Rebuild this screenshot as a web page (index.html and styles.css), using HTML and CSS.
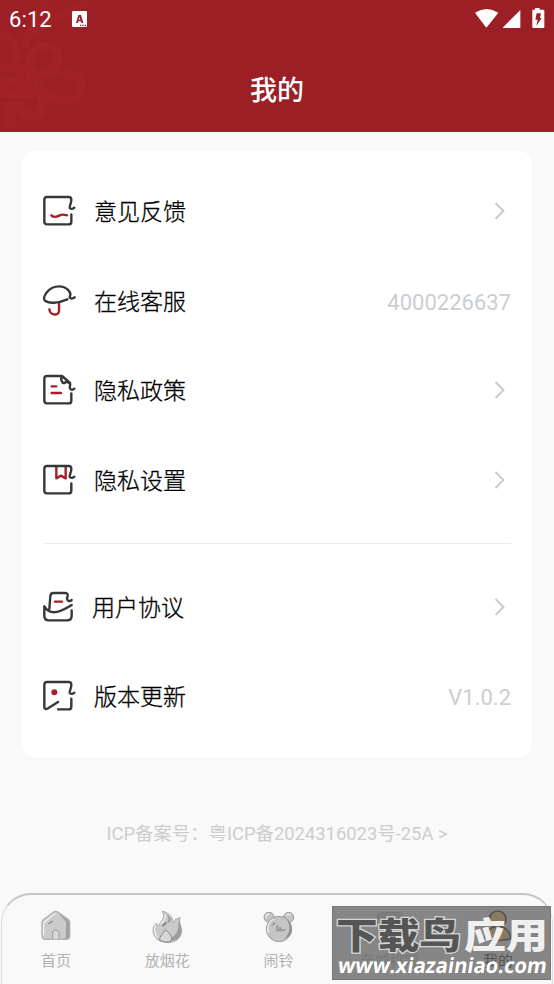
FILE: index.html
```html
<!DOCTYPE html>
<html lang="zh-CN">
<head>
<meta charset="utf-8">
<title>我的</title>
<link rel="stylesheet" href="styles.css">
</head>
<body>
<div class="screen">
  <header class="header">
    <svg class="knot" width="94" height="132" viewBox="0 0 94 132">
      <g class="cord">
        <path d="M31 64C28 52 38 46 47 46S61 56 57 63S44 72 33 74M33 80C45 70 62 71 73 75S84 89 80 95S62 103 52 98S40 88 33 86M18 100C20 111 24 118 33 117S45 105 42 98S36 92 31 90M17 62C20 50 14 36-3 35M25 47C29 30 38 22 47 0M34 35C42 22 63 18 88 0"/>
        <path d="M0 68H32M20 66V98M31 66V98M0 82H30M0 94H30M10 100V130"/>
      </g>
      <g class="cord-fine">
        <path d="M31 67C24 50 40 42 49 43S65 57 60 65S45 74 34 76M36 84C46 75 63 75 72 79S80 88 76 92S62 98 54 94S42 86 36 84M22 101C24 111 32 115 37 109S41 98 34 94M16 64V99M27 64V99M35 68V98M5 103V130M15 103V130M0 64H14M0 88H14"/>
      </g>
    </svg>
    <div class="status">
      <span class="time">6:12</span>
      <svg class="badge" width="15" height="16" viewBox="0 0 45 48"><rect width="45" height="48" rx="4" fill="#fff"/><path fill="#9d1f26" fill-rule="evenodd" d="M12 36L19 12H27L34 36H28L26.500 31H19L17.500 36ZM20.500 26H25L22.800 18ZM24 41h4v4h-4zM31 41h4v4h-4zM38 41h4v4h-4z"/></svg>
      <svg class="signals" width="70" height="21" viewBox="0 0 210 63" fill="#fff"><path d="M0 14Q35-8 70 14L36 57Q34 59 32 57ZM83 59L136 6V60H84ZM172 5H180V0H194V5H205Q208 5 208 8V57Q208 60 205 60H175Q172 60 172 57Z"/><path fill="#9d1f26" d="M185 16h13l-3 14h5l-16 24 4-19h-7z"/></svg>
    </div>
    <h1 class="title">我的</h1>
  </header>

  <main class="main">
    <section class="card">
      <div class="row">
        <svg class="icon" viewBox="0 0 102 96"><path d="M88 58V80Q88 88 80 88H15Q7 88 7 80V14Q7 6 15 6H80Q88 6 88 14C88 26 80 37 84 40Q90 44 97 38"/><path class="accent" d="M28 61C37 70 46 65 53 61S66 59 75 61"/></svg>
        <span class="label">意见反馈</span>
        <svg class="chevron" viewBox="0 0 11 18"><path d="M1.500 1L9.500 9L1.500 17"/></svg>
      </div>
      <div class="row">
        <svg class="icon" viewBox="0 0 102 96"><path class="accent" d="M51 57V77C51 94 25 92 22 73"/><path d="M76 43C48 55 20 57 9 47C-1 37 20 4 51 4C74 4 89 22 84 33C80 40 91 43 98 37"/></svg>
        <span class="label">在线客服</span>
        <span class="value">4000226637</span>
      </div>
      <div class="row">
        <svg class="icon" viewBox="0 0 102 96"><path d="M88 58V80Q88 88 80 88H15Q7 88 7 80V14Q7 6 15 6H60L84 27C86 34 81 41 85 45Q90 50 97 44M60 6C54 16 61 29 67 27Q75 20 84 29"/><path class="accent" d="M29 37H43M29 57H57"/></svg>
        <span class="label">隐私政策</span>
        <svg class="chevron" viewBox="0 0 11 18"><path d="M1.500 1L9.500 9L1.500 17"/></svg>
      </div>
      <div class="row">
        <svg class="icon" viewBox="0 0 102 96"><path class="accent" d="M43 8V43L57 35L71 43V8"/><path d="M88 58V80Q88 88 80 88H15Q7 88 7 80V14Q7 6 15 6H80Q88 6 88 14C88 26 80 37 84 40Q90 44 97 38"/></svg>
        <span class="label">隐私设置</span>
        <svg class="chevron" viewBox="0 0 11 18"><path d="M1.500 1L9.500 9L1.500 17"/></svg>
      </div>
      <div class="divider"></div>
      <div class="row">
        <svg class="icon" viewBox="0 0 102 96"><path d="M22 54L25 15Q26 6 34 6H68Q79 6 77 15C73 23 76 30 81 30Q86 31 89 27M7 46V74Q7 88 21 88H75Q89 88 89 74V58M7 46C23 72 48 68 89 42"/><path class="accent" d="M39 32H60"/></svg>
        <span class="label label-tight">用户协议</span>
        <svg class="chevron" viewBox="0 0 11 18"><path d="M1.500 1L9.500 9L1.500 17"/></svg>
      </div>
      <div class="row">
        <svg class="icon" viewBox="0 0 102 96"><path d="M48 66L16 86Q7 90 7 80V14Q7 6 15 6H80Q88 6 88 14C88 26 80 37 84 40Q90 44 97 38M88 56V80Q88 88 80 88H48"/><circle cx="37" cy="37" r="9" fill="#a81f29" stroke="none"/></svg>
        <span class="label">版本更新</span>
        <span class="value">V1.0.2</span>
      </div>
    </section>
    <p class="icp">ICP备案号：粤ICP备2024316023号-25A &gt;</p>
  </main>

  <nav class="tabs">
    <div class="tab">
      <svg class="tab-icon" viewBox="0 0 96 102"><path d="M6 37Q6 32 10 29L41 6Q47 2 53 6L84 28Q89 32 89 37V77Q89 88 78 88H17Q6 88 6 77Z" fill="#cbcbcb" stroke="#b0b0b0" stroke-width="4"/><path d="M54 8L84 30Q88 34 88 40V75Q88 87 78 87H72Q78 85 78 77V35Z" fill="#a1a1a1"/><path d="M11 76V38L46 10" fill="none" stroke="#efefef" stroke-width="4"/><path d="M38 88V70Q38 60 47 60T57 70V88" fill="#d8d8d8" stroke="#999" stroke-width="3"/><path d="M25 42L38 33" stroke="#888" stroke-width="4"/></svg>
      <span>首页</span>
    </div>
    <div class="tab">
      <svg class="tab-icon" viewBox="0 0 96 102"><path d="M34 3C58 11 66 24 66 37Q71 37 73 28L88 23C80 37 95 50 91 70C86 91 67 99 46 97C23 96 6 82 6 61Q5 49 15 40L21 48C31 33 44 25 34 3Z" fill="#cacaca" stroke="#aaa" stroke-width="3"/><path d="M87 25C77 39 87 48 78 66C68 82 61 80 59 93Q85 92 90 70C95 51 80 39 87 25ZM43 9Q58 22 49 39Q64 34 58 23Z" fill="#9c9c9c"/><path d="M13 44Q5 70 20 83M43 12Q45 26 29 43" fill="none" stroke="#eee" stroke-width="4"/><path d="M26 90C25 77 38 71 43 59C56 69 64 79 61 92Q45 101 26 90Z" fill="#d7d7d7" stroke="#888" stroke-width="3"/><path d="M32 46L46 34V42L36 50Z" fill="#888"/></svg>
      <span>放烟花</span>
    </div>
    <div class="tab">
      <svg class="tab-icon" viewBox="0 0 96 102"><g fill="#c5c5c5" stroke="#999" stroke-width="3"><circle cx="18" cy="22" r="15"/><circle cx="77" cy="22" r="15"/><circle cx="48" cy="57" r="38"/></g><path d="M71 28Q91 59 63 88Q89 78 86 54Q84 36 71 28Z" fill="#929292"/><path d="M9 24Q8 12 19 12M69 16Q75 10 82 14M16 69Q8 40 31 27" fill="none" stroke="#efefef" stroke-width="4"/><path d="M24 48L34 36L38 41Z" fill="#888"/><path d="M43 45V61H67M52 51V62" fill="none" stroke="#999" stroke-width="6"/></svg>
      <span>闹铃</span>
    </div>
    <div class="tab">
      <svg class="tab-icon" viewBox="0 0 96 102"><rect x="10" y="8" width="76" height="60" rx="14" fill="#ccc" stroke="#aaa" stroke-width="4"/></svg>
      <span>亲戚称呼</span>
    </div>
    <div class="tab tab-active">
      <svg class="tab-icon" viewBox="0 0 96 102"><g fill="#ffc050" stroke="#000" stroke-width="5"><path d="M9 86C9 64 25 50 47 50S86 64 86 86Q47 97 9 86Z"/><circle cx="47" cy="28" r="25"/></g></svg>
      <span>我的</span>
    </div>
  </nav>
  <div class="watermark">
    <svg width="219" height="74" viewBox="0 0 219 74">
      <g class="wm-name">
        <text class="wm-dark" x="4" y="43" textLength="125" lengthAdjust="spacingAndGlyphs">下载鸟</text>
        <text class="wm-light" x="132" y="43" textLength="84" lengthAdjust="spacingAndGlyphs">应用</text>
      </g>
      <text class="wm-url" transform="translate(5 67) skewX(-9)" textLength="209" lengthAdjust="spacingAndGlyphs">www.xiazainiao.com</text>
    </svg>
  </div>
</div>
</body>
</html>
```
FILE: styles.css
```css
* { box-sizing: border-box; }

body {
  margin: 0;
  background: #f9f9f9;
  font-family: Roboto, "Noto Sans CJK SC", sans-serif;
}

.screen {
  position: relative;
  display: flex;
  flex-direction: column;
  width: 554px;
  height: 984px;
  overflow: hidden;
}

.header {
  position: relative;
  height: 132px;
  flex: none;
  background: #9d1f26;
  color: #fff;
}

.knot { position: absolute; left: 0; top: 0; }
.cord { fill: none; stroke: #a5272b; stroke-width: 8; opacity: .4; }
.cord-fine { fill: none; stroke: #a92c30; stroke-width: 1; stroke-dasharray: 4 2; opacity: .55; }

.status {
  position: relative;
  display: flex;
  align-items: center;
  height: 38px;
  padding: 0 9px 0 9px;
}

.time { width: 63px; padding-top: 2px; font-size: 22px; line-height: 38px; letter-spacing: .1px; }
.badge { margin-top: -1px; }
.signals { margin-left: auto; margin-top: -1px; }

.title {
  position: relative;
  margin: 33px 0 0;
  font-size: 27px;
  font-weight: 500;
  line-height: 40px;
  text-align: center;
}

.main { padding: 19px 22px 0; flex: 1; }

.card {
  height: 606px;
  padding: 15px 21px 0;
  border-radius: 13px;
  background: #fff;
}

.row { display: flex; align-items: center; height: 89.7px; }

.icon {
  width: 34px;
  height: 32px;
  margin-left: -1px;
  fill: none;
  stroke: #363838;
  stroke-width: 7.2;
  stroke-linecap: round;
  stroke-linejoin: round;
}

.icon .accent { stroke: #a81f29; }

.label {
  margin-left: 18px;
  padding-top: 4px;
  color: #000;
  font-size: 23px;
  font-weight: 300;
  line-height: 34px;
  -webkit-text-stroke: .3px #000;
}

.label-tight { margin-left: 16px; }
.value { margin-left: auto; padding-top: 4px; color: #cbced2; font-size: 22px; line-height: 30px; }

.chevron {
  width: 11px;
  height: 18px;
  margin-left: auto;
  margin-right: 6px;
  fill: none;
  stroke: #c9c9d0;
  stroke-width: 1.9;
}

.divider { height: 1px; margin: 18px 0; background: #ececec; }

.icp {
  margin: 63px 0 0;
  color: #cdcdcd;
  font-size: 18.4px;
  line-height: 28px;
  text-align: center;
}

.tabs {
  display: flex;
  flex: none;
  height: 91px;
  margin: 0 1px;
  padding-top: 15px;
  border: 1px solid #dedede;
  border-top: 2px solid #c4c4c4;
  border-bottom: 0;
  border-radius: 30px 30px 0 0;
}

.tab {
  display: flex;
  flex: 1;
  flex-direction: column;
  align-items: center;
  color: #b2b2b2;
  font-size: 15px;
  line-height: 22px;
}

.tab:nth-child(-n+3) { padding-right: 3px; }
.tab-icon { width: 32px; height: 34px; margin-bottom: 6px; }
.tab-active { color: #000; }

.watermark {
  position: absolute;
  left: 332px;
  top: 906px;
  width: 219px;
  height: 74px;
  border: 1px solid #777;
  background: rgba(105, 105, 105, .8);
}

.watermark svg { display: block; margin: -1px; }
.wm-name { font: 900 36px "Noto Sans CJK SC", sans-serif; }
.wm-dark { fill: #555; stroke: #d5d5d5; stroke-width: 2.5px; paint-order: stroke; }
.wm-light { fill: #fff; opacity: .88; }
.wm-url { fill: #fff; font: 700 21px "Open Sans", "Noto Sans", sans-serif; }
```
